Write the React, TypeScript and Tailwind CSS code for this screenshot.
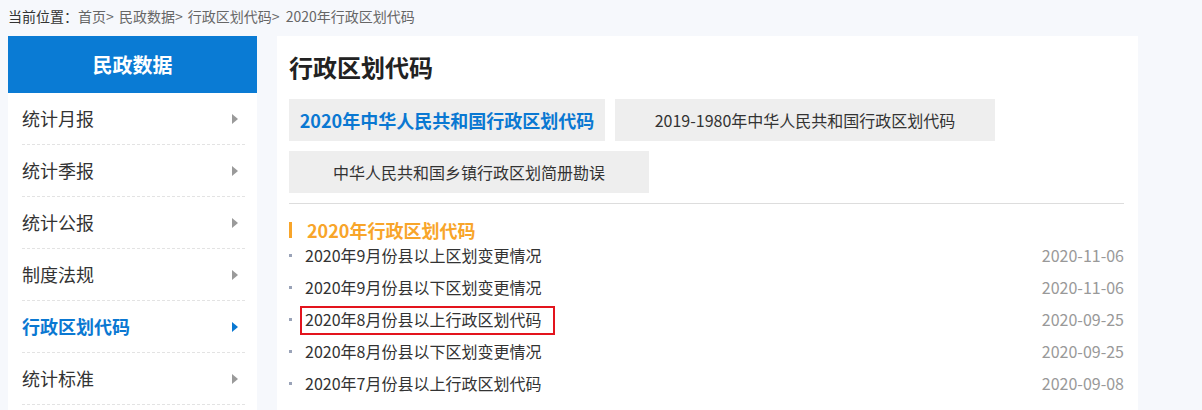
import React from 'react'

const menu = [
  { label: '统计月报' },
  { label: '统计季报' },
  { label: '统计公报' },
  { label: '制度法规' },
  { label: '行政区划代码', active: true },
  { label: '统计标准' },
]

const news = [
  { title: '2020年9月份县以上区划变更情况', date: '2020-11-06' },
  { title: '2020年9月份县以下区划变更情况', date: '2020-11-06' },
  { title: '2020年8月份县以上行政区划代码', date: '2020-09-25', marked: true },
  { title: '2020年8月份县以下区划变更情况', date: '2020-09-25' },
  { title: '2020年7月份县以上行政区划代码', date: '2020-09-08' },
]

const Arrow = ({ active }: { active?: boolean }) => (
  <span
    className={`block w-0 h-0 border-y-[5px] border-y-transparent border-l-[6px] ${
      active ? 'border-l-[#0a78d2]' : 'border-l-[#9a9a9a]'
    }`}
  />
)

export default function App() {
  return (
    <div
      className="h-[410px] overflow-hidden bg-[#f6f8fc] text-[#333]"
      style={{ fontFamily: '"Noto Sans CJK SC", "Noto Sans", sans-serif' }}
    >
      {/* breadcrumb */}
      <div className="h-[32px] pl-2 flex items-center text-[14px] text-[#666]">
        <span className="text-[#333]">当前位置：</span>
        <span>首页&gt;&nbsp;</span>
        <span className="ml-[2px]">民政数据&gt;&nbsp;</span>
        <span className="ml-[2px]">行政区划代码&gt;&nbsp;</span>
        <span className="ml-[3px]">2020年行政区划代码</span>
      </div>

      <div className="flex gap-[20px] pl-2 mt-1">
        {/* sidebar */}
        <aside className="w-[249px] shrink-0 bg-white">
          <div className="h-[57px] bg-[#0a7bd4] flex items-center justify-center text-white text-[20px] font-bold">
            民政数据
          </div>
          <ul className="pl-[14px] pr-[12px]">
            {menu.map((m) => (
              <li
                key={m.label}
                className="h-[52px] border-b border-dashed border-[#e3e3e3] flex items-center justify-between pr-[7px]"
              >
                <span
                  className={`text-[18px] ${m.active ? 'text-[#0a78d2] font-bold' : 'text-[#333]'}`}
                >
                  {m.label}
                </span>
                <Arrow active={m.active} />
              </li>
            ))}
          </ul>
        </aside>

        {/* main */}
        <main className="w-[861px] shrink-0 bg-white pl-[12px] pr-[14px] pb-6">
          <h1 className="pt-[17px] text-[24px] leading-[28px] font-bold text-[#222] mb-[18px]">
            行政区划代码
          </h1>

          <div className="flex flex-wrap gap-[10px]">
            <div className="w-[316px] h-[42px] bg-[#eeeeee] flex items-center justify-center text-[18px] font-bold text-[#0a78d2]">
              2020年中华人民共和国行政区划代码
            </div>
            <div className="w-[380px] h-[42px] bg-[#eeeeee] flex items-center justify-center text-[16px] text-[#333]">
              2019-1980年中华人民共和国行政区划代码
            </div>
            <div className="w-[360px] h-[42px] bg-[#eeeeee] flex items-center justify-center text-[16px] text-[#333]">
              中华人民共和国乡镇行政区划简册勘误
            </div>
          </div>

          <div className="mt-[10px] border-t border-[#dddddd]" />

          <div className="mt-[18px] h-[16px] flex items-center">
            <span className="w-[3px] h-[16px] bg-[#f8a52a]" />
            <span className="ml-[15px] text-[18px] leading-[16px] font-bold text-[#f8a52a]">
              2020年行政区划代码
            </span>
          </div>

          <ul className="mt-[1px]">
            {news.map((n) => (
              <li key={n.title} className="h-[32px] flex items-center text-[16px] leading-[18px]">
                <span className="w-[3px] h-[3px] bg-[#9aa3b8]" />
                <span className="ml-[13px] relative text-[#333]">
                  {n.title}
                  {n.marked && (
                    <span className="absolute -left-[5px] -right-[14px] -top-[4px] -bottom-[7px] border-2 border-[#e3141d]" />
                  )}
                </span>
                <span className="ml-auto text-[#999]">{n.date}</span>
              </li>
            ))}
          </ul>
        </main>
      </div>
    </div>
  )
}
